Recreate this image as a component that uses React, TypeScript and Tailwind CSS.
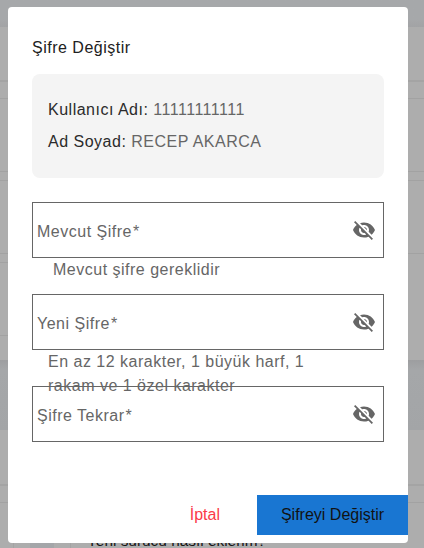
import React from "react";

function EyeOff() {
  return (
    <svg viewBox="0 0 24 24" className="size-6 shrink-0" fill="#666666" aria-hidden="true">
      <path d="M12 7c2.76 0 5 2.24 5 5 0 .65-.13 1.26-.36 1.83l2.92 2.92c1.51-1.26 2.7-2.89 3.43-4.75-1.73-4.39-6-7.5-11-7.5-1.4 0-2.74.25-3.98.7l2.16 2.16C10.74 7.13 11.35 7 12 7zM2 4.27l2.28 2.28.46.46C3.08 8.3 1.78 10.02 1 12c1.73 4.39 6 7.5 11 7.5 1.55 0 3.03-.3 4.38-.84l.42.42L19.73 22 21 20.73 3.27 3 2 4.27zM7.53 9.8l1.55 1.55c-.05.21-.08.43-.08.65 0 1.66 1.34 3 3 3 .22 0 .44-.03.65-.08l1.55 1.55c-.67.33-1.41.53-2.2.53-2.76 0-5-2.24-5-5 0-.79.2-1.53.53-2.2zm4.31-.78l3.15 3.15.02-.16c0-1.66-1.34-3-3-3l-.17.01z" />
    </svg>
  );
}

function Field({ label }: { label: string }) {
  return (
    <div className="flex h-14 items-center justify-between border border-[#666666] pr-[7px] pl-1">
      <span className="pt-[3px] leading-6">
        {label}
        <span className="ml-px">*</span>
      </span>
      <EyeOff />
    </div>
  );
}

function Backdrop() {
  return (
    <div className="flex h-full flex-col bg-[#a5a7a9]">
      <div className="h-[27px] shrink-0 bg-linear-to-b from-[#a6a8aa] from-70% to-[#a2a3a5]" />
      <div className="flex h-[333px] shrink-0 flex-col bg-[#adadad]">
        <div className="h-[55px] border-b-2 border-[#a4a4a4]" />
        <div className="h-[17px] border-b border-[#a2a2a2]" />
        <div className="h-[73px] border-b border-[#a2a2a2]" />
        <div className="h-[9px] border-b border-[#a2a2a2]" />
        <div className="h-[73px] border-b border-[#a2a2a2]" />
        <div className="h-[9px] w-10 border-b border-[#a2a2a2]" />
        <div className="h-[73px] w-10 border-b border-[#a2a2a2]" />
      </div>
      <div className="h-[70px] shrink-0 bg-linear-to-b from-[#9d9ea0] via-[#a5a7a9] via-15% to-[#a3a5a7]" />
      <div className="flex h-[118px] shrink-0 flex-col bg-[#adadad]">
        <div className="h-14 border-b-2 border-[#a4a4a4]" />
        <div className="h-[17px] border-b border-[#a2a2a2]" />
        <div className="flex h-[45px] items-end">
          <div className="h-full w-[14px] border-r border-[#a4a4a4]" />
          <div className="h-full w-4" />
          <div className="h-full w-6 bg-[#a4a6a9]" />
          <div className="h-full w-[17px] border-r border-[#a4a4a4]" />
          <span className="pl-4 text-[15.4px] leading-[14px] whitespace-nowrap text-[#151515]">
            Yeni sürücü nasıl eklerim?
          </span>
        </div>
      </div>
    </div>
  );
}

export default function App() {
  return (
    <div className="relative h-[548px] w-[424px] overflow-hidden font-['Liberation_Sans',Arial,sans-serif] text-base">
      <Backdrop />
      <div
        role="dialog"
        className="absolute top-[7px] left-2 flex h-[536px] w-[400px] flex-col overflow-hidden rounded-[4px] bg-white tracking-[0.5px] text-[#666666]"
      >
        <div className="px-6 pt-[29px]">
          <h2 className="leading-6 text-[#212121]">Şifre Değiştir</h2>
          <div className="mt-[14px] flex h-[104px] flex-col gap-2 rounded-lg bg-[#f4f4f4] px-4 pt-6">
            <p className="leading-6">
              <span className="text-[#2b2b2b]">Kullanıcı Adı:</span> 11111111111
            </p>
            <p className="leading-6">
              <span className="text-[#2b2b2b]">Ad Soyad:</span> RECEP AKARCA
            </p>
          </div>
          <div className="mt-6 flex flex-col">
            <Field label="Mevcut Şifre" />
            <p className="h-9 pl-[21px] leading-6">Mevcut şifre gereklidir</p>
            <Field label="Yeni Şifre" />
            <p className="h-9 w-[300px] pl-4 leading-6">
              En az 12 karakter, 1 büyük harf, 1 rakam ve 1 özel karakter
            </p>
            <Field label="Şifre Tekrar" />
          </div>
        </div>
        <div className="mt-[53px] flex items-center justify-end tracking-normal">
          <button className="h-10 px-[37px] text-[#fb3a48]">İptal</button>
          <button className="h-10 w-[151px] bg-[#1976d2] text-[#121212]">Şifreyi Değiştir</button>
        </div>
      </div>
    </div>
  );
}
